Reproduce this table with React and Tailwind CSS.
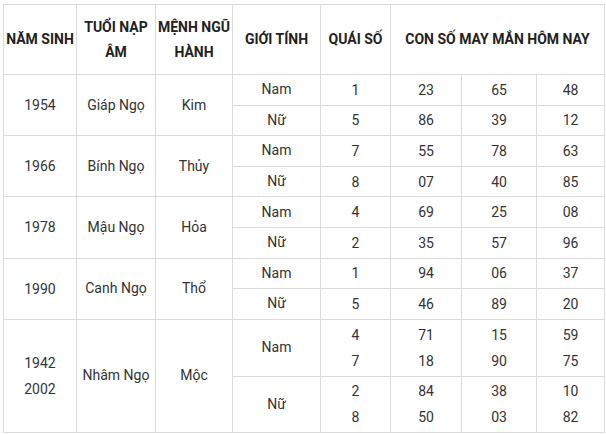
import React from "react";

const groups = [
  {
    year: ["1954"],
    tuoi: "Giáp Ngọ",
    menh: "Kim",
    rows: [
      { gt: "Nam", qs: ["1"], n: [["23"], ["65"], ["48"]] },
      { gt: "Nữ", qs: ["5"], n: [["86"], ["39"], ["12"]] }
    ]
  },
  {
    year: ["1966"],
    tuoi: "Bính Ngọ",
    menh: "Thủy",
    rows: [
      { gt: "Nam", qs: ["7"], n: [["55"], ["78"], ["63"]] },
      { gt: "Nữ", qs: ["8"], n: [["07"], ["40"], ["85"]] }
    ]
  },
  {
    year: ["1978"],
    tuoi: "Mậu Ngọ",
    menh: "Hỏa",
    rows: [
      { gt: "Nam", qs: ["4"], n: [["69"], ["25"], ["08"]] },
      { gt: "Nữ", qs: ["2"], n: [["35"], ["57"], ["96"]] }
    ]
  },
  {
    year: ["1990"],
    tuoi: "Canh Ngọ",
    menh: "Thổ",
    rows: [
      { gt: "Nam", qs: ["1"], n: [["94"], ["06"], ["37"]] },
      { gt: "Nữ", qs: ["5"], n: [["46"], ["89"], ["20"]] }
    ]
  },
  {
    year: ["1942", "2002"],
    tuoi: "Nhâm Ngọ",
    menh: "Mộc",
    tall: true,
    rows: [
      { gt: "Nam", qs: ["4", "7"], n: [["71", "18"], ["15", "90"], ["59", "75"]] },
      { gt: "Nữ", qs: ["2", "8"], n: [["84", "50"], ["38", "03"], ["10", "82"]] }
    ]
  }
];

const cell = "border border-[#dcdcdc] text-center align-middle p-0";

const Lines = ({ items }) => (
  <>
    {items.map((t, i) => (
      <div key={i} className="leading-[26px]">
        {t}
      </div>
    ))}
  </>
);

export default function App() {
  return (
    <div className="bg-white w-[606px] h-[434px] pt-[4px] pl-[3px]" style={{ fontFamily: "Roboto, 'Liberation Sans', sans-serif" }}>
      <table className="border-collapse table-fixed w-[601px] text-[14px] text-[#333]">
        <colgroup>
          <col className="w-[73px]" />
          <col className="w-[79px]" />
          <col className="w-[77px]" />
          <col className="w-[88px]" />
          <col className="w-[70px]" />
          <col className="w-[71px]" />
          <col className="w-[75px]" />
          <col className="w-[68px]" />
        </colgroup>
        <thead>
          <tr className="h-[70px] font-bold text-[#222] leading-[25px]">
            <th className={cell}>NĂM SINH</th>
            <th className={cell}>
              TUỔI NẠP
              <br />
              ÂM
            </th>
            <th className={cell}>
              MỆNH NGŨ
              <br />
              HÀNH
            </th>
            <th className={cell}>GIỚI TÍNH</th>
            <th className={cell}>QUÁI SỐ</th>
            <th className={cell} colSpan={3}>
              CON SỐ MAY MẮN HÔM NAY
            </th>
          </tr>
        </thead>
        <tbody>
          {groups.map((g) =>
            g.rows.map((r, i) => (
              <tr key={g.tuoi + i} className={g.tall ? (i === 0 ? "h-[57px]" : "h-[56px]") : "h-[30.6px]"}>
                {i === 0 && (
                  <>
                    <td className={cell} rowSpan={2}>
                      <Lines items={g.year} />
                    </td>
                    <td className={cell} rowSpan={2}>
                      {g.tuoi}
                    </td>
                    <td className={cell} rowSpan={2}>
                      {g.menh}
                    </td>
                  </>
                )}
                <td className={cell}>{r.gt}</td>
                <td className={cell}>
                  <Lines items={r.qs} />
                </td>
                {r.n.map((col, j) => (
                  <td key={j} className={cell}>
                    <Lines items={col} />
                  </td>
                ))}
              </tr>
            ))
          )}
        </tbody>
      </table>
    </div>
  );
}
